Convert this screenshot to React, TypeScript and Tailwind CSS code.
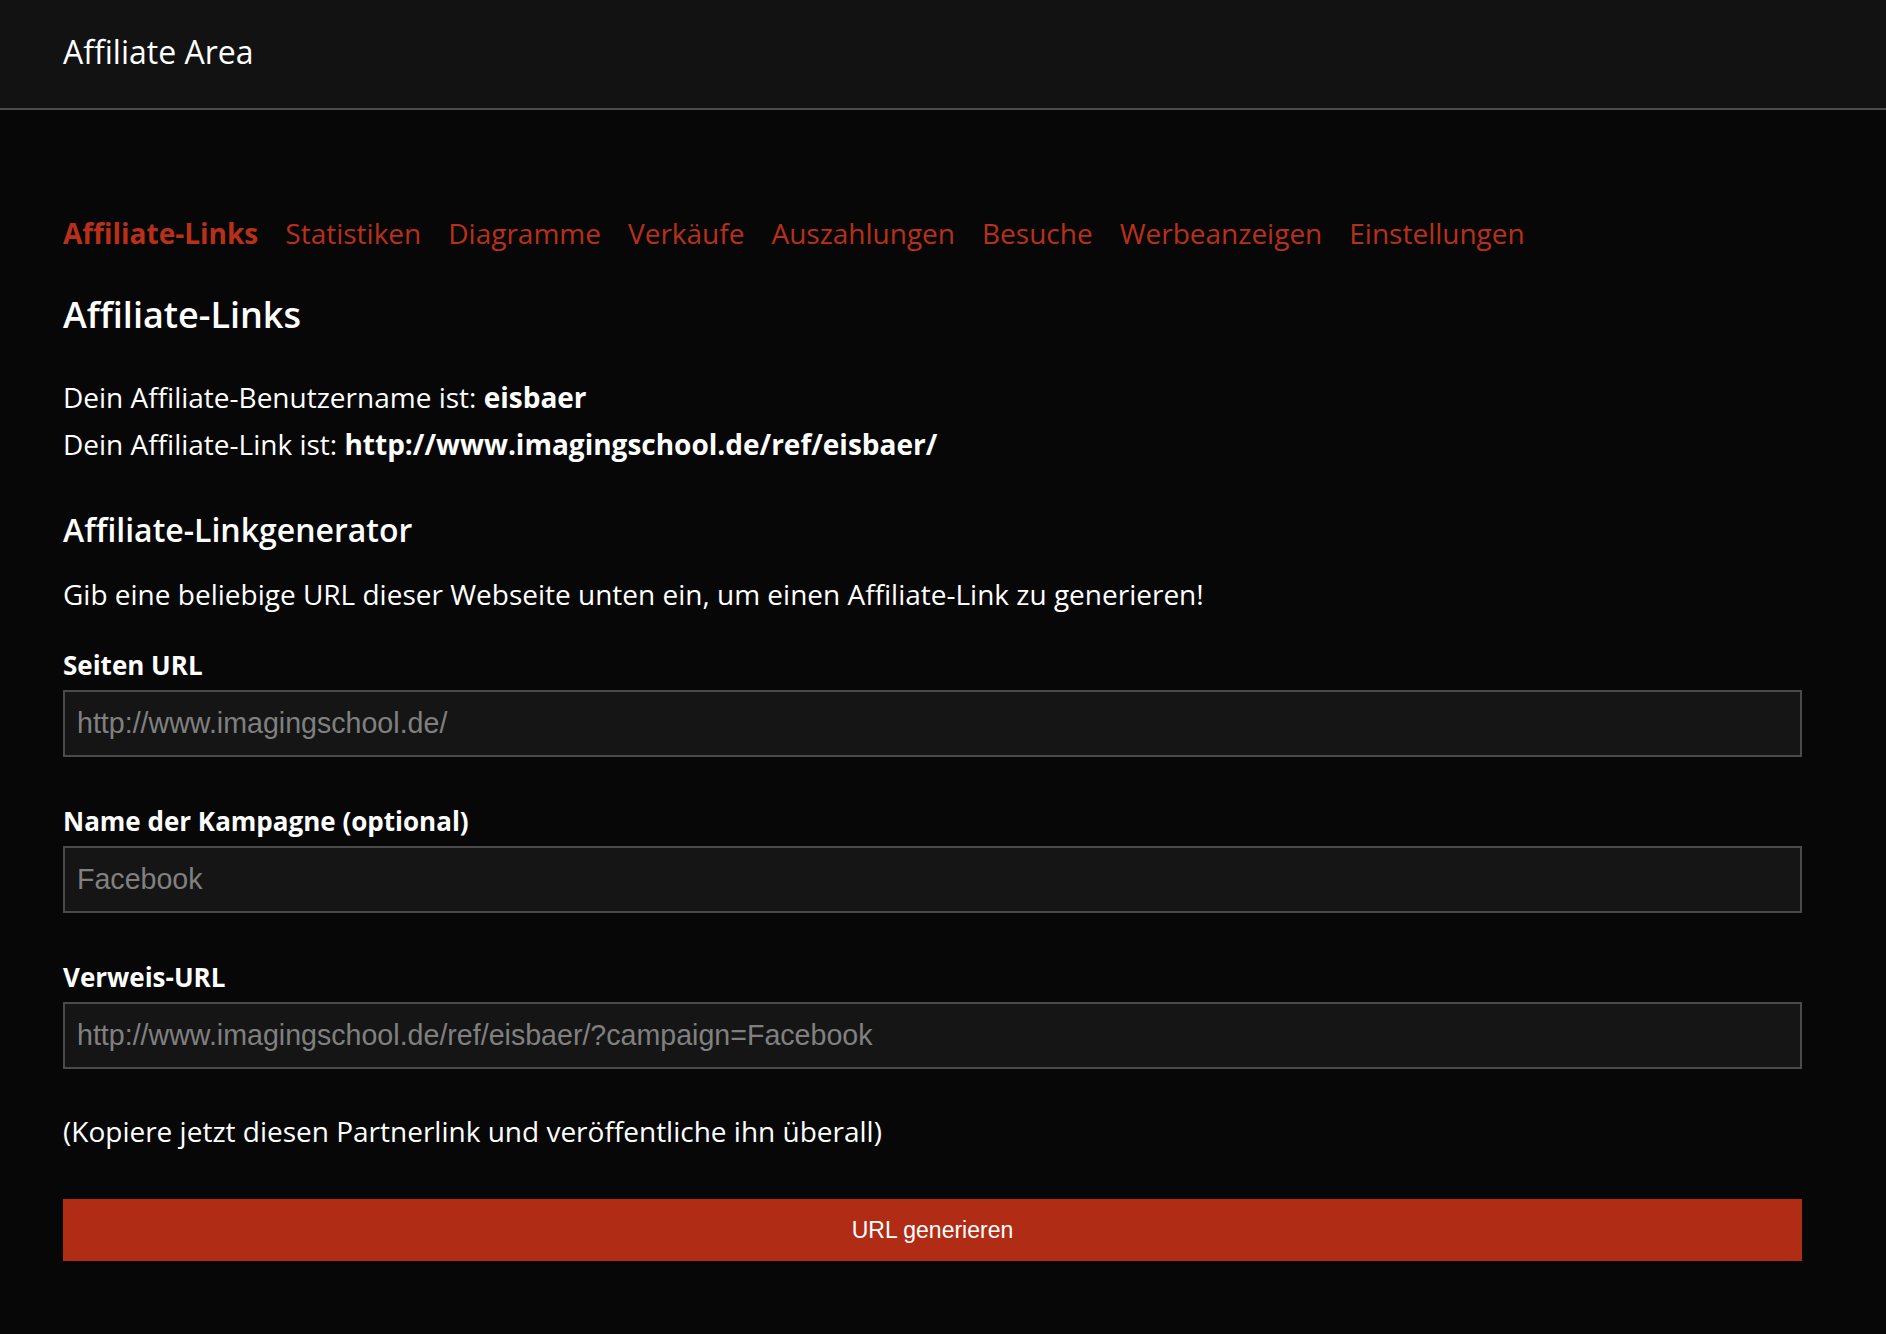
const NAV_ITEMS = [
  "Affiliate-Links",
  "Statistiken",
  "Diagramme",
  "Verkäufe",
  "Auszahlungen",
  "Besuche",
  "Werbeanzeigen",
  "Einstellungen",
];

interface FieldProps {
  label: string;
  value: string;
  className?: string;
}

function Field({ label, value, className }: FieldProps) {
  return (
    <div className={className}>
      <label className="block text-[26px] font-bold leading-[40px] text-white">{label}</label>
      <input
        type="text"
        readOnly
        value={value}
        className="mt-[5px] block h-[67px] w-full border-2 border-[#4a4a4a] bg-[#151515] px-[12px] font-['Liberation_Sans',Arial,sans-serif] text-[28.6px] text-[#808080] outline-none"
      />
    </div>
  );
}

export default function App() {
  return (
    <div className="min-h-[1334px] bg-[#070707] font-['Open_Sans',sans-serif] text-white">
      <header className="flex h-[110px] items-center border-b-2 border-[#4b4b4b] bg-[#121212] px-[63px] pb-[5px]">
        <h1 className="text-[32px] font-normal leading-none">Affiliate Area</h1>
      </header>

      <main className="w-[1739px] ml-[63px] pb-[72px]">
        <nav className="mt-[102px] flex gap-x-[27px] text-[28px] leading-[42px] text-[#b8301a]">
          {NAV_ITEMS.map((item, i) => (
            <a key={item} href="#" className={i === 0 ? "font-bold" : ""}>
              {item}
            </a>
          ))}
        </nav>

        <h2 className="mt-[37px] text-[36px] font-semibold leading-[47px]">Affiliate-Links</h2>

        <div className="mt-[36px] text-[28px] leading-[47px]">
          <p>
            Dein Affiliate-Benutzername ist: <strong className="font-bold">eisbaer</strong>
          </p>
          <p>
            Dein Affiliate-Link ist:{" "}
            <strong className="font-bold">http://www.imagingschool.de/ref/eisbaer/</strong>
          </p>
        </div>

        <h3 className="mt-[41px] text-[32px] font-semibold leading-[42px]">Affiliate-Linkgenerator</h3>

        <p className="mt-[20px] text-[28px] leading-[47px]">
          Gib eine beliebige URL dieser Webseite unten ein, um einen Affiliate-Link zu generieren!
        </p>

        <Field className="mt-[27px]" label="Seiten URL" value="http://www.imagingschool.de/" />
        <Field className="mt-[44px]" label="Name der Kampagne (optional)" value="Facebook" />
        <Field
          className="mt-[44px]"
          label="Verweis-URL"
          value="http://www.imagingschool.de/ref/eisbaer/?campaign=Facebook"
        />

        <p className="mt-[39px] text-[28px] leading-[47px]">
          (Kopiere jetzt diesen Partnerlink und veröffentliche ihn überall)
        </p>

        <button
          type="button"
          className="mt-[44px] block h-[62px] w-full bg-[#b12c14] font-['Liberation_Sans',Arial,sans-serif] text-[23px] text-white"
        >
          URL generieren
        </button>
      </main>
    </div>
  );
}
